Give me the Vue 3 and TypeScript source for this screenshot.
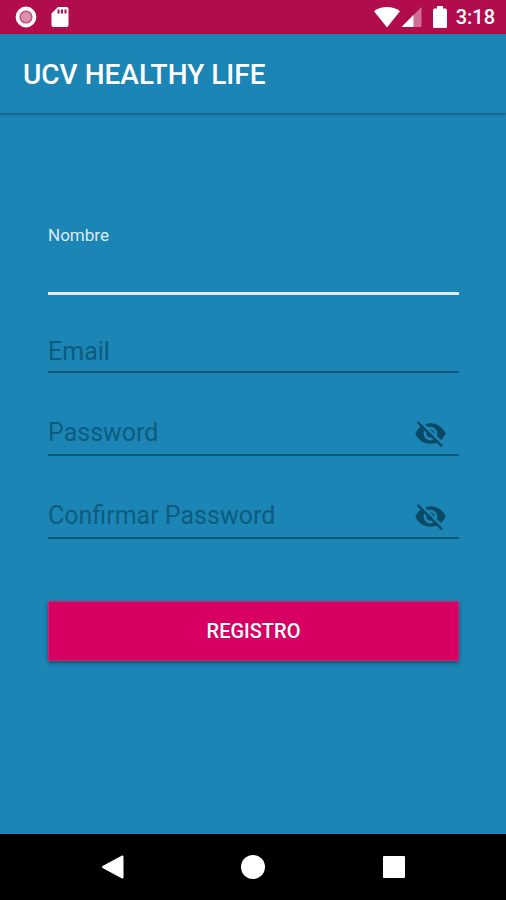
<script setup lang="ts">
import { reactive, ref } from 'vue'

type FieldKey = 'nombre' | 'email' | 'password' | 'confirm'

interface Field {
  key: FieldKey
  label: string
  type: string
}

const fields: Field[] = [
  { key: 'email', label: 'Email', type: 'email' },
  { key: 'password', label: 'Password', type: 'password' },
  { key: 'confirm', label: 'Confirmar Password', type: 'password' },
]

const form = reactive<Record<FieldKey, string>>({
  nombre: '',
  email: '',
  password: '',
  confirm: '',
})

const visible = reactive<Record<string, boolean>>({})
const submitted = ref(false)

function inputType(field: Field): string {
  return field.type === 'password' && visible[field.key] ? 'text' : field.type
}

function toggle(key: FieldKey): void {
  visible[key] = !visible[key]
}

function register(): void {
  submitted.value = true
}
</script>

<template>
  <div class="screen">
    <div class="status">
      <div class="status-group notices">
        <svg width="22" height="22" viewBox="0 0 22 22" aria-hidden="true">
          <circle cx="11" cy="11" r="8.500" fill="none" stroke="#fff" stroke-width="3.800" />
          <circle cx="11" cy="11" r="7" fill="#fff" fill-opacity=".3" />
          <circle cx="11" cy="11" r="5" fill="#fff" fill-opacity=".35" />
        </svg>
        <svg width="18" height="22" viewBox="0 0 18 22" aria-hidden="true">
          <path fill="#fff" d="M7 1h8.500a2 2 0 0 1 2 2v16a2 2 0 0 1-2 2h-13a2 2 0 0 1-2-2V7.500z" />
          <path fill="#b10c4d" d="M6.500 3.500h2v4h-2zM10 3.500h2v4h-2zM13.500 3.500h2v4h-2z" />
        </svg>
      </div>
      <div class="status-group signals">
        <svg width="28" height="22" viewBox="0 0 28 22" aria-hidden="true">
          <path fill="#fff" d="M14 21.500 1 5.200C8.500-.4 19.500-.4 27 5.200z" />
        </svg>
        <svg class="cell" width="21" height="22" viewBox="0 0 21 22" aria-hidden="true">
          <path fill="#fff" fill-opacity=".4" d="M20.500 1v20H.5z" />
          <path fill="#fff" d="M12.500 9v12H.5z" />
        </svg>
        <svg width="14" height="22" viewBox="0 0 14 22" aria-hidden="true">
          <path fill="#fff" d="M4 0h6v2.500h2.500q1.500 0 1.500 1.500v16.500q0 1.500-1.500 1.500h-11Q0 22 0 20.500V4q0-1.500 1.500-1.500H4z" />
        </svg>
        <span class="clock">3:18</span>
      </div>
    </div>

    <header class="bar">
      <h1>UCV HEALTHY LIFE</h1>
    </header>

    <main>
      <form novalidate @submit.prevent="register">
        <div class="field active">
          <label for="nombre">Nombre</label>
          <input id="nombre" v-model="form.nombre" type="text" autocomplete="off" />
        </div>
        <div
          v-for="field in fields"
          :key="field.key"
          class="field"
          :class="{ secret: field.type === 'password' }"
        >
          <label class="hint" :class="{ filled: form[field.key] }" :for="field.key">{{ field.label }}</label>
          <input
            :id="field.key"
            v-model="form[field.key]"
            :type="inputType(field)"
            autocomplete="off"
          />
          <button
            v-if="field.type === 'password'"
            class="eye"
            type="button"
            :aria-pressed="!!visible[field.key]"
            aria-label="Mostrar"
            @click="toggle(field.key)"
          >
            <svg width="33" height="33" viewBox="0 0 24 24" aria-hidden="true">
              <path
                fill="currentColor"
                d="M12 7c2.760 0 5 2.240 5 5 0 .65-.13 1.260-.36 1.830l2.920 2.920c1.510-1.260 2.700-2.890 3.430-4.750-1.730-4.390-6-7.500-11-7.500-1.400 0-2.740.25-3.980.7l2.160 2.160C10.740 7.130 11.350 7 12 7zM2 4.270l2.280 2.280.46.46C3.080 8.300 1.780 10.020 1 12c1.730 4.390 6 7.500 11 7.500 1.550 0 3.030-.3 4.380-.84l.42.42L19.730 22 21 20.730 3.270 3 2 4.270zM7.530 9.800l1.550 1.550c-.05.21-.08.43-.08.65 0 1.660 1.340 3 3 3 .22 0 .44-.03.65-.08l1.550 1.550c-.67.33-1.410.53-2.200.53-2.760 0-5-2.240-5-5 0-.79.2-1.530.53-2.200zm4.310-.78l3.150 3.150.02-.16c0-1.660-1.340-3-3-3l-.17.01z"
              />
            </svg>
          </button>
        </div>
        <button class="submit" type="submit">REGISTRO</button>
      </form>
    </main>

    <nav class="system">
      <button type="button" aria-label="Atrás">
        <svg width="24" height="24" viewBox="0 0 24 24" aria-hidden="true">
          <path fill="#fff" stroke="#fff" stroke-width="2" stroke-linejoin="round" d="M22.500 1.500v21L3 12z" />
        </svg>
      </button>
      <button type="button" aria-label="Inicio">
        <svg width="24" height="24" viewBox="0 0 24 24" aria-hidden="true">
          <circle cx="12" cy="12" r="12" fill="#fff" />
        </svg>
      </button>
      <button type="button" aria-label="Recientes">
        <svg width="24" height="24" viewBox="0 0 24 24" aria-hidden="true">
          <rect x="1" y="1" width="22" height="22" rx="1" fill="#fff" />
        </svg>
      </button>
    </nav>
  </div>
</template>

<style>
body {
  margin: 0;
}
</style>

<style scoped>
.screen {
  box-sizing: border-box;
  min-height: 100vh;
  display: flex;
  flex-direction: column;
  background: #1b85b5;
  color: #fff;
  font-family: Roboto, "Noto Sans", sans-serif;
}

button {
  border: 0;
  padding: 0;
  background: none;
  color: inherit;
  font: inherit;
  cursor: pointer;
}

svg {
  display: block;
}

.status {
  display: flex;
  align-items: center;
  justify-content: space-between;
  height: 34px;
  padding: 0 11px 0 15px;
  background: #b10c4d;
}

.status-group {
  display: flex;
  align-items: center;
}

.notices {
  gap: 14px;
}

.cell {
  margin-right: 11px;
}

.clock {
  margin-left: 9px;
  font-size: 20px;
  font-weight: 500;
  line-height: 24px;
}

.bar {
  box-sizing: border-box;
  display: flex;
  align-items: center;
  height: 79px;
  padding: 2px 23px 0;
  box-shadow: 0 1px 3px rgba(0, 0, 0, 0.4);
}

h1 {
  margin: 0;
  font-size: 28px;
  font-weight: 500;
  line-height: 32px;
}

main {
  flex: 1;
  padding: 112px 47px 40px 48px;
}

form {
  display: flex;
  flex-direction: column;
  gap: 41px;
}

.field {
  box-sizing: border-box;
  display: grid;
  grid-template-columns: 1fr auto;
  align-items: center;
  height: 42px;
  padding-top: 2px;
  border-bottom: 2px solid #0b5879;
}

.field.secret {
  padding: 0 0 2px;
}

.field.active {
  display: flex;
  flex-direction: column;
  align-items: stretch;
  height: 70px;
  margin-bottom: -5px;
  padding-top: 0;
  border-bottom: 3px solid #e4ebf0;
}

.active label {
  color: #dcebf3;
  font-size: 17px;
  line-height: 20px;
}

.hint,
.hint + input {
  grid-row: 1;
  grid-column: 1;
}

.hint {
  color: #0d5c80;
  font-size: 25px;
  line-height: 32px;
  pointer-events: none;
}

.hint.filled {
  visibility: hidden;
}

input {
  box-sizing: border-box;
  width: 100%;
  min-width: 0;
  height: 32px;
  border: 0;
  padding: 0;
  outline: 0;
  background: transparent;
  color: #fff;
  font: inherit;
  font-size: 25px;
}

.active input {
  flex: 1;
}

.eye {
  margin-right: 12px;
  color: #084a66;
}

.submit {
  height: 60px;
  margin-top: 21px;
  border: 1px solid #c42a70;
  background: #d70062;
  box-shadow: 0 2px 4px rgba(0, 0, 0, 0.4);
  font-size: 20px;
  font-weight: 500;
}

.system {
  display: grid;
  grid-template-columns: repeat(3, 1fr);
  height: 66px;
  padding: 0 42px;
  background: #000;
}

.system button {
  display: flex;
  align-items: center;
  justify-content: center;
}
</style>
